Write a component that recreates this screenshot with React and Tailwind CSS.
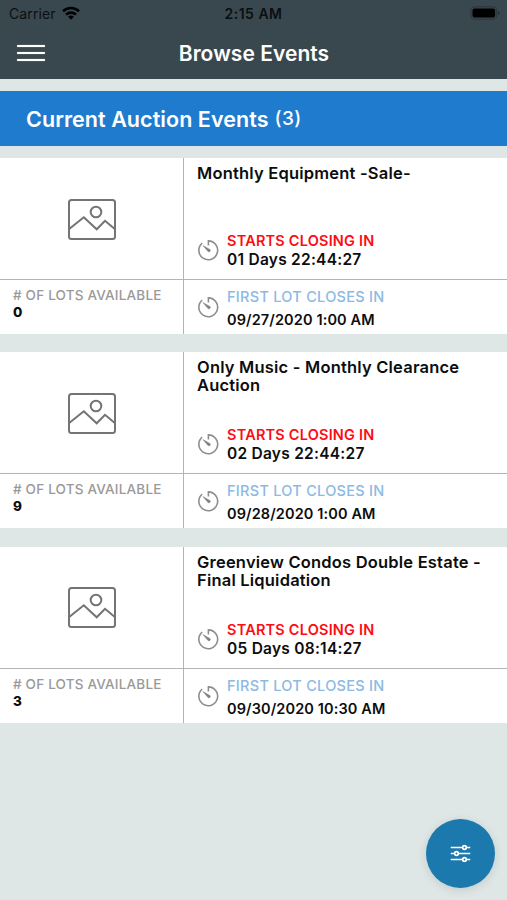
import React from 'react';

const events = [
    { id: 1, title: 'Monthly Equipment -Sale-', countdown: '01 Days 22:44:27', closes: '09/27/2020 1:00 AM', lots: 0 },
    { id: 2, title: 'Only Music - Monthly Clearance Auction', countdown: '02 Days 22:44:27', closes: '09/28/2020 1:00 AM', lots: 9 },
    { id: 3, title: 'Greenview Condos Double Estate - Final Liquidation', countdown: '05 Days 08:14:27', closes: '09/30/2020 10:30 AM', lots: 3 },
];

const TimerIcon = () => (
    <svg className="w-[22px] h-[22px] shrink-0" viewBox="0 0 22 22" fill="none" stroke="#8e8e8e" strokeWidth="1.6">
        <path d="M5.2 4.1A9.4 9.4 0 1 0 11.4 1.9V6.6" />
        <path d="M5.9 6.6L13.2 10.7A1.5 1.5 0 0 1 11.2 12.7Z" fill="#808080" stroke="#808080" strokeWidth="0.5" />
    </svg>
);

const ImageIcon = () => (
    <svg className="w-12 h-[41px]" viewBox="0 0 48 41" fill="none" stroke="#747474" strokeWidth="2">
        <rect x="1" y="1" width="46" height="39" rx="2.5" />
        <circle cx="28" cy="13" r="5.3" />
        <path d="M1.5 29.8L15.8 18.3L28.7 30.3L37 21.8L46.5 29.8" />
    </svg>
);

const StatusBar = () => (
    <div className="h-7 px-[9px] flex items-center justify-between text-[#0b0f11]">
        <div className="flex-1 flex items-center gap-[6px]">
            <span className="text-[14px] tracking-[0.1px] -translate-y-px">Carrier</span>
            <svg className="w-[18px] h-[14px] -translate-y-px" viewBox="0 0 18 14" fill="none" stroke="#000" strokeWidth="2.6">
                <path d="M1 5.3A11.5 11.5 0 0 1 17 5.3" />
                <path d="M4 8.6A7.2 7.2 0 0 1 14 8.6" />
                <path d="M9 13.7L6.1 10.8A4.2 4.2 0 0 1 11.9 10.8Z" fill="#000" stroke="none" />
            </svg>
        </div>
        <span className="text-[14px] font-semibold tracking-[0.5px] -translate-y-px">2:15 AM</span>
        <div className="flex-1 flex justify-end">
            <svg className="w-[30px] h-[14px] translate-x-[2px] -translate-y-px" viewBox="0 0 30 14">
                <rect x="0.8" y="0.8" width="26" height="12.4" rx="3.6" fill="none" stroke="#2b363b" strokeWidth="1" />
                <rect x="2.5" y="2.5" width="22.6" height="9" rx="2" fill="#000" />
                <path d="M28.3 5.2A2 2 0 0 1 28.3 8.8Z" fill="#1c2529" />
            </svg>
        </div>
    </div>
);

const EventCard = ({ event }) => (
    <div className="h-[176px] flex bg-white">
        <div className="w-[184px] shrink-0 flex flex-col border-r border-[#b4b4b4]">
            <div className="h-[122px] pt-px flex items-center justify-center border-b border-[#b4b4b4]">
                <ImageIcon />
            </div>
            <div className="pl-[13px] pt-[7px]">
                <p className="text-[13.5px] leading-[17px] font-medium tracking-[0.2px] text-[#999999] whitespace-nowrap"># OF LOTS AVAILABLE</p>
                <p className="text-[13.5px] leading-[17px] font-extrabold">{event.lots}</p>
            </div>
        </div>
        <div className="flex-1 flex flex-col">
            <div className="h-[122px] pl-[13px] pt-[6px] pb-[10px] flex flex-col justify-between border-b border-[#b4b4b4]">
                <h2 className="text-[16.5px] leading-[18px] font-semibold tracking-[0.2px] w-[300px]">{event.title}</h2>
                <div className="flex items-center gap-2">
                    <TimerIcon />
                    <div className="whitespace-nowrap">
                        <p className="text-[14.5px] leading-[19px] font-semibold tracking-[0.2px] text-[#fd0d12]">STARTS CLOSING IN</p>
                        <p className="text-[15.5px] leading-[19px] font-semibold tracking-[0.25px]">{event.countdown}</p>
                    </div>
                </div>
            </div>
            <div className="h-[54px] pl-[13px] flex items-center gap-2">
                <TimerIcon />
                <div className="pt-[3px] whitespace-nowrap">
                    <p className="text-[14.5px] leading-[20px] font-medium tracking-[0.28px] text-[#8dbae3]">FIRST LOT CLOSES IN</p>
                    <p className="pt-[3px] text-[14.5px] leading-[20px] font-semibold tracking-[0.12px]">{event.closes}</p>
                </div>
            </div>
        </div>
    </div>
);

const App = () => {
    return (
        <div className="h-[900px] w-full overflow-hidden bg-[#dee7e6] font-['Inter',sans-serif] text-[#0d0d0d]">
            <header className="h-[79px] bg-[#39484f]">
                <StatusBar />
                <div className="h-[50px] pl-[17px] pr-[17px] flex items-center">
                    <button className="w-[28px] flex flex-col gap-[5px]" aria-label="Menu">
                        <span className="h-[2px] bg-white rounded-[1px] shadow-[0_0_1px_rgba(255,255,255,0.8)]"></span>
                        <span className="h-[2px] bg-white rounded-[1px] shadow-[0_0_1px_rgba(255,255,255,0.8)]"></span>
                        <span className="h-[2px] bg-white rounded-[1px] shadow-[0_0_1px_rgba(255,255,255,0.8)]"></span>
                    </button>
                    <h1 className="flex-1 pr-[27px] pt-px text-center text-[21px] font-semibold tracking-[0.05px] text-white">Browse Events</h1>
                </div>
            </header>

            <div className="mt-3 h-[55px] pl-[26px] pt-[2px] flex items-center gap-[6px] bg-[#1f7bcd] text-white whitespace-nowrap">
                <span className="text-[21.5px] font-semibold tracking-[0.06px]">Current Auction Events</span>
                <span className="text-[19px] font-medium tracking-[0.4px]">(3)</span>
            </div>

            <div className="mt-[12px] flex flex-col gap-[18.4px]">
                {events.map((event) => (
                    <EventCard key={event.id} event={event} />
                ))}
            </div>

            <button className="fixed right-[12px] bottom-[12px] w-[69px] h-[69px] rounded-full bg-[#1c79ae] flex items-center justify-center shadow-[0_2px_10px_rgba(0,0,0,0.12)]" aria-label="Filter">
                <svg className="w-5 h-[18px] -translate-x-[0.5px] -translate-y-[0.5px]" viewBox="0 0 20 18" fill="#1c79ae" stroke="#fff" strokeWidth="1.7">
                    <path d="M0 3H20M0 9H20M0 15H20" />
                    <circle cx="14" cy="3" r="1.8" />
                    <circle cx="6" cy="9" r="1.8" />
                    <circle cx="14" cy="15" r="1.8" />
                </svg>
            </button>
        </div>
    );
};

export default App;
